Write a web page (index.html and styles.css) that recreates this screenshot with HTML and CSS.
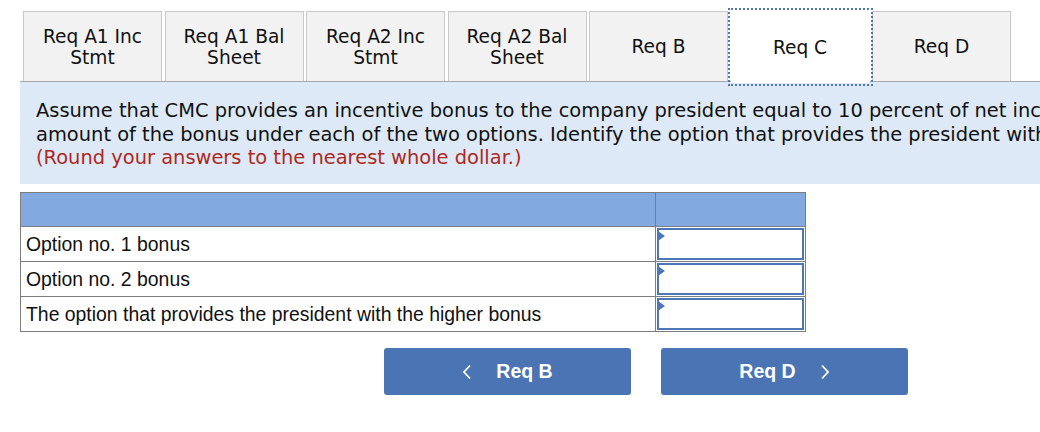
FILE: index.html
```html
<!DOCTYPE html>
<html>
<head>
<meta charset="utf-8">
<link rel="stylesheet" href="styles.css">
</head>
<body>
<div class="page">
  <div class="tabs">
    <div class="tab">Req A1 Inc<br>Stmt</div>
    <div class="tab">Req A1 Bal<br>Sheet</div>
    <div class="tab">Req A2 Inc<br>Stmt</div>
    <div class="tab">Req A2 Bal<br>Sheet</div>
    <div class="tab">Req B</div>
    <div class="tab active">Req C</div>
    <div class="tab">Req D</div>
  </div>
  <div class="prompt">
    <p class="line">Assume that CMC provides an incentive bonus to the company president equal to 10 percent of net income. Compute the</p>
    <p class="line">amount of the bonus under each of the two options. Identify the option that provides the president with the higher bonus.</p>
    <p class="line red">(Round your answers to the nearest whole dollar.)</p>
  </div>
  <table class="grid">
    <tr class="head"><td class="c1"></td><td class="c2"></td></tr>
    <tr><td class="c1">Option no. 1 bonus</td><td class="c2 inp"><span class="field"><span class="mark"></span></span></td></tr>
    <tr><td class="c1">Option no. 2 bonus</td><td class="c2 inp"><span class="field"><span class="mark"></span></span></td></tr>
    <tr><td class="c1">The option that provides the president with the higher bonus</td><td class="c2 inp"><span class="field"><span class="mark"></span></span></td></tr>
  </table>
  <div class="nav">
    <div class="btn"><svg class="chev" width="10" height="16" viewBox="0 0 10 16"><polyline points="8,1.5 2,8 8,14.5" fill="none" stroke="#fff" stroke-width="1.8"/></svg><span>Req B</span></div>
    <div class="btn"><span>Req D</span><svg class="chev" width="10" height="16" viewBox="0 0 10 16"><polyline points="2,1.5 8,8 2,14.5" fill="none" stroke="#fff" stroke-width="1.8"/></svg></div>
  </div>
</div>
</body>
</html>
```
FILE: styles.css
```css
html, body { margin: 0; padding: 0; background: #fff; }
.page { width: 1040px; height: 432px; overflow: hidden; font-family: "DejaVu Sans", Verdana, sans-serif; color: #111; }
.tabs { margin: 11px 0 0 20px; padding-left: 3px; display: flex; gap: 2.5px; border-bottom: 1px solid #a8a8a8; height: 70px; }
.tab { width: 139px; box-sizing: border-box; height: 70px; background: #f2f2f2; border: 1px solid #c9c9c9; border-bottom: none; display: flex; align-items: center; justify-content: center; text-align: center; font-size: 18.6px; line-height: 21.5px; padding-top: 1px; }
.tab.active { background: #fff; border: none; outline: 2px dotted #4c78bd; outline-offset: 1px; height: 72px; position: relative; z-index: 1; }
.prompt { margin-left: 20px; background: #dde9f7; padding: 17px 0 0 16px; height: 85px; white-space: nowrap; overflow: hidden; }
.line { margin: 0; font-size: 19.45px; line-height: 23.5px; }
.red { color: #ad2822; }
.grid { margin: 8px 0 0 20px; border-collapse: collapse; font-family: "Liberation Sans", Arial, sans-serif; font-size: 19.4px; line-height: 22px; }
.grid td { border: 1px solid #7d7d7d; height: 34.2px; padding: 0; box-sizing: border-box; }
.grid .c1 { width: 635px; padding-left: 5px; }
.grid .c2 { width: 150px; }
.head td { background: #82aae0; }
.inp { position: relative; }
.field { display: block; margin: 1px; height: 28px; border: 2px solid #4c76b6; background: #fff; position: relative; }
.mark { position: absolute; left: -1px; top: 1px; width: 0; height: 0; border-top: 5px solid transparent; border-bottom: 5px solid transparent; border-left: 7px solid #4c76b6; }
.nav { display: flex; gap: 30px; margin: 16px 0 0 384px; }
.btn { width: 247px; height: 47px; background: #4a74b4; border-radius: 3px; color: #fff; display: flex; align-items: center; justify-content: center; gap: 24px; font-family: "Liberation Sans", Arial, sans-serif; font-weight: bold; font-size: 19.5px; }
.chev { display: block; }
```
